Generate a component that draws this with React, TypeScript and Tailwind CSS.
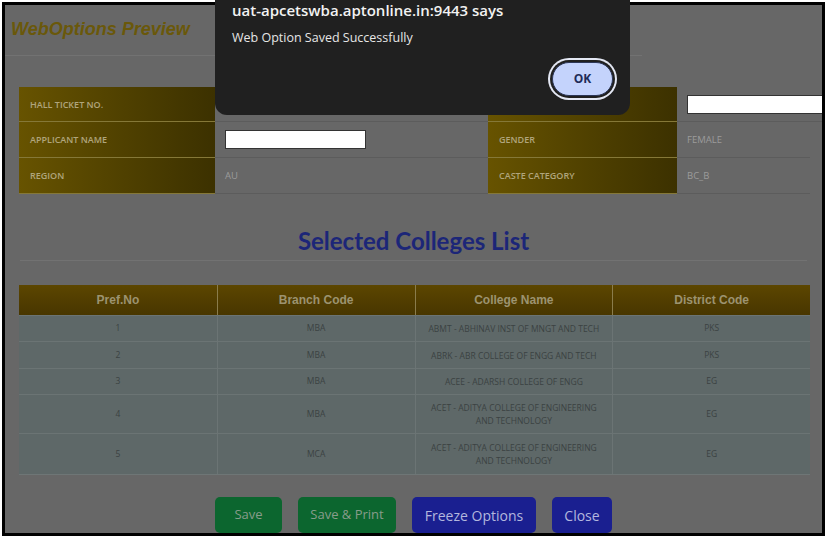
import React from 'react';

const info = [
  { l1: 'HALL TICKET NO.', v1: '', l2: 'DATE OF BIRTH', v2: 'input', h: 'h-[35px]' },
  { l1: 'APPLICANT NAME', v1: 'input', l2: 'GENDER', v2: 'FEMALE', h: 'h-[36px]' },
  { l1: 'REGION', v1: 'AU', l2: 'CASTE CATEGORY', v2: 'BC_B', h: 'h-[36px]' },
];

const colleges = [
  { no: '1', branch: 'MBA', name: ['ABMT - ABHINAV INST OF MNGT AND TECH'], dist: 'PKS', h: 'h-[26px]' },
  { no: '2', branch: 'MBA', name: ['ABRK - ABR COLLEGE OF ENGG AND TECH'], dist: 'PKS', h: 'h-[27px]' },
  { no: '3', branch: 'MBA', name: ['ACEE - ADARSH COLLEGE OF ENGG'], dist: 'EG', h: 'h-[26px]' },
  { no: '4', branch: 'MBA', name: ['ACET - ADITYA COLLEGE OF ENGINEERING', 'AND TECHNOLOGY'], dist: 'EG', h: 'h-[39px]' },
  { no: '5', branch: 'MCA', name: ['ACET - ADITYA COLLEGE OF ENGINEERING', 'AND TECHNOLOGY'], dist: 'EG', h: 'h-[41px]' },
];

function Label({ text }: { text: string }) {
  return (
    <div className="flex items-center pl-[11px] bg-gradient-to-r from-[#675300] to-[#3c3100] border-b border-[#857838] text-[9px] font-semibold uppercase text-[#b0a57c]">
      {text}
    </div>
  );
}

function Value({ text }: { text: string }) {
  return (
    <div className="relative flex items-center pl-[10px] border-b border-[#5c5c5c] text-[9.5px] text-[#9b9b9b]">
      {text === 'input' ? (
        <div className="w-[141px] h-[19px] bg-white border border-[#333]" />
      ) : (
        text
      )}
    </div>
  );
}

export default function App() {
  return (
    <div className="relative w-[828px] h-[539px] bg-white pt-[2px] pl-[2px] overflow-hidden" style={{ fontFamily: '"Open Sans", "Liberation Sans", sans-serif' }}>
      {/* dimmed page */}
      <div className="w-[823px] h-[534px] border-[3px] border-black bg-[#676767] overflow-hidden flex flex-col">
        <div className="h-[52px] border-b border-[#727272] pl-[6px] pt-[13px] mr-[180px]">
          <div className="text-[18px] leading-[22px] font-bold italic text-[#6a580a]" style={{ fontFamily: 'Arial, "Liberation Sans", sans-serif' }}>
            WebOptions Preview
          </div>
        </div>

        <div className="mt-[31px] ml-[14px] w-[791px] grid grid-cols-[196px_273px_189px_133px]">
          {info.map((r) => (
            <React.Fragment key={r.l1}>
              <div className={`${r.h} grid`}><Label text={r.l1} /></div>
              <div className={`${r.h} grid`}><Value text={r.v1} /></div>
              <div className={`${r.h} grid`}><Label text={r.l2} /></div>
              <div className={`${r.h} grid`}><Value text={r.v2} /></div>
            </React.Fragment>
          ))}
        </div>

        <div className="mt-[29px] mx-[15px] h-[38px] pt-[3px] border-b border-[#727272] text-center">
          <div className="text-[24px] leading-[29px] font-bold text-[#1c2678]" style={{ fontFamily: 'Lato, "Open Sans", sans-serif' }}>
            Selected Colleges List
          </div>
        </div>

        <div className="mt-[24px] ml-[14px] w-[791px] bg-[#5e6868] border-b border-[#6e7676]">
          <div className="grid grid-cols-4 h-[30px] bg-gradient-to-b from-[#5c4600] to-[#483600]">
            {['Pref.No', 'Branch Code', 'College Name', 'District Code'].map((h, i) => (
              <div
                key={h}
                className={`flex items-center justify-center text-[12px] font-bold text-[#9c9370] ${i > 0 ? 'border-l border-[#8a7c4c]' : ''}`}
                style={{ fontFamily: 'Arial, "Liberation Sans", sans-serif' }}
              >
                {h}
              </div>
            ))}
          </div>
          {colleges.map((c) => (
            <div key={c.no} className={`grid grid-cols-4 ${c.h} border-t border-[#6b7474] text-[8.5px] text-[#3b4242]`}>
              <div className="flex items-center justify-center">{c.no}</div>
              <div className="flex items-center justify-center border-l border-[#6b7474]">{c.branch}</div>
              <div className="flex flex-col items-center justify-center border-l border-[#6b7474] leading-[13px]">
                {c.name.map((n) => (
                  <span key={n}>{n}</span>
                ))}
              </div>
              <div className="flex items-center justify-center border-l border-[#6b7474]">{c.dist}</div>
            </div>
          ))}
        </div>

        <div className="mt-[22px] flex justify-center gap-4 text-[13px]">
          <button className="h-[36px] w-[67px] rounded-[5px] bg-[#0c662f] text-[#879c8b]">Save</button>
          <button className="h-[36px] w-[98px] rounded-[5px] bg-[#0c662f] text-[#879c8b]">Save &amp; Print</button>
          <button className="h-[36px] w-[124px] rounded-[5px] bg-[#1a1f90] text-[#b3b7de] text-[14px]">Freeze Options</button>
          <button className="h-[36px] w-[60px] rounded-[5px] bg-[#1a1f90] text-[#b3b7de] text-[14px]">Close</button>
        </div>
      </div>

      {/* browser alert */}
      <div className="absolute top-0 left-[215px] w-[415px] h-[115px] rounded-b-[12px] bg-[#202020] pl-[17px]">
        <div className="text-[15px] leading-[20px] font-semibold text-[#f2f2f2]">uat-apcetswba.aptonline.in:9443 says</div>
        <div className="mt-[9px] text-[12.5px] leading-[17px] text-[#e6e6e6]">Web Option Saved Successfully</div>
        <div className="flex justify-end pr-[17px] mt-[16px]">
          <button className="w-[61px] h-[34px] rounded-full bg-[#c4d3fc] border border-[#2c3656] shadow-[0_0_0_2px_#202020,0_0_0_4px_#e4e8f4] text-[12px] font-bold text-[#1e2b58]">
            OK
          </button>
        </div>
      </div>
    </div>
  );
}
